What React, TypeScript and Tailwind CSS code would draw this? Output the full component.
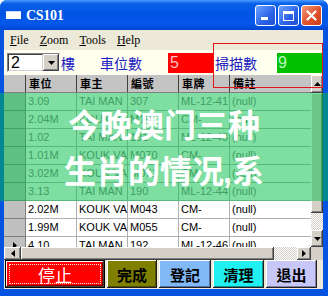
import React from 'react';

const rows: string[][] = [
  ['3.09', 'TAI MAN', '307', 'ML-12-41', '(null)'],
  ['2.04M', 'KOUK VA', 'M102', 'CM-', '(null)'],
  ['1.02', 'TAI MAN', '191', 'ML-12-43', '(null)'],
  ['1.01M', 'KOUK VA', 'M070', 'CM-', '(null)'],
  ['3.02M', 'KOUK VA', 'M071', 'CM-', '(null)'],
  ['3.13', 'TAI MAN', '190', 'ML-12-44', '(null)'],
  ['2.02M', 'KOUK VA', 'M043', 'CM-', '(null)'],
  ['1.99M', 'KOUK VA', 'M055', 'CM-', '(null)'],
  ['4.10', 'TAI MAN', '192', 'ML-12-46', '(null)'],
];

const headers = ['車位', '車主', '編號', '車牌', '備註'];

function Tri({ dir }: { dir: 'up' | 'down' | 'left' | 'right' }) {
  const pts =
    dir === 'up'
      ? '0,4 7,4 3.5,0'
      : dir === 'down'
      ? '0,0 7,0 3.5,4'
      : dir === 'left'
      ? '4,0 4,7 0,3.5'
      : '0,0 0,7 4,3.5';
  const w = dir === 'up' || dir === 'down' ? 7 : 4;
  const h = dir === 'up' || dir === 'down' ? 4 : 7;
  return (
    <svg width={w} height={h} viewBox={`0 0 ${w} ${h}`}>
      <polygon points={pts} fill="#000" />
    </svg>
  );
}

const bevel =
  'bg-[#d4d0c8] shadow-[inset_-1px_-1px_#404040,inset_1px_1px_#ffffff,inset_-2px_-2px_#808080]';

export default function App() {
  return (
    <div className="relative w-[328px] h-[296px] bg-white overflow-hidden font-['Liberation_Sans',Arial,sans-serif]">
      <div className="flex flex-col w-full h-full rounded-t-[7px] bg-[#0553e1]">
        {/* Title bar */}
        <div className="flex items-center h-[30px] rounded-t-[7px] pl-[6px] pr-[6px] bg-[linear-gradient(180deg,#4c9cff_0%,#0a60ea_12%,#0054e3_45%,#0558ea_80%,#0046d2_100%)]">
          <div className="w-[15px] h-[8px] bg-white border-t border-[#c8dcff]" />
          <span className="ml-[5px] text-white font-bold text-[14px] font-['Liberation_Serif',serif] tracking-[-0.3px]">
            CS101
          </span>
          <div className="ml-auto flex gap-[2px] self-start mt-[5px]">
            <div className="w-[21px] h-[21px] rounded-[3px] border border-white bg-[linear-gradient(135deg,#6ea2ff,#2a62e8_60%,#1f4fd0)] flex items-end pl-[5px] pb-[5px]">
              <div className="w-[7px] h-[3px] bg-white" />
            </div>
            <div className="w-[21px] h-[21px] rounded-[3px] border border-white bg-[linear-gradient(135deg,#6ea2ff,#2a62e8_60%,#1f4fd0)] flex items-center justify-center">
              <div className="w-[11px] h-[10px] border border-white border-t-[3px]" />
            </div>
            <div className="w-[21px] h-[21px] rounded-[3px] border border-white bg-[linear-gradient(135deg,#f09a7c,#e0522c_55%,#c8401c)] flex items-center justify-center">
              <svg width="11" height="11" viewBox="0 0 11 11">
                <path d="M1.5 1.5 L9.5 9.5 M9.5 1.5 L1.5 9.5" stroke="#fff" strokeWidth="2.2" strokeLinecap="round" />
              </svg>
            </div>
          </div>
        </div>

        {/* Client */}
        <div className="flex flex-col ml-[4px] mr-[5px] h-[259px] bg-[#ece9d8]">
          {/* Menu */}
          <div className="flex items-center h-[20px] pl-[6px] gap-[11px] text-[12px] text-black font-['Liberation_Serif',serif]">
            <span><span className="underline">F</span>ile</span>
            <span><span className="underline">Z</span>oom</span>
            <span><span className="underline">T</span>ools</span>
            <span><span className="underline">H</span>elp</span>
          </div>

          {/* Toolbar */}
          <div className="flex items-center h-[25px] pl-[3px] bg-[#fffff0] font-['Noto_Sans_CJK_TC',sans-serif] text-[14px] text-[#2020c0]">
            <div className="flex w-[53px] h-[19px] bg-white border border-t-[#808080] border-l-[#808080] border-r-white border-b-white">
              <div className="flex-1 flex items-center pl-[2px] text-[16px] leading-none text-black font-['Liberation_Sans',sans-serif] border border-t-[#404040] border-l-[#404040] border-r-[#d4d0c8] border-b-[#d4d0c8]">
                2
              </div>
              <div className={`w-[16px] flex items-center justify-center ${bevel}`}>
                <Tri dir="down" />
              </div>
            </div>
            <span className="ml-[1px] w-[39px] leading-none">樓</span>
            <span className="w-[68px] leading-none">車位數</span>
            <div className="w-[46px] h-[20px] bg-[#ff0000] flex items-center pl-[2px] text-[16px] text-[#ffc0c0] font-['Liberation_Sans',sans-serif]">
              5
            </div>
            <span className="w-[63px] pl-[1px] leading-none">掃描數</span>
            <div className="w-[45px] h-[20px] bg-[#00c000] flex items-center pl-[1px] text-[16px] text-[#b8f8b8] font-['Liberation_Sans',sans-serif]">
              9
            </div>
          </div>

          {/* Grid */}
          <div className="flex flex-col h-[185px]">
            <div className="flex h-[172px]">
              <div className="w-[307px] overflow-hidden bg-white text-[11px]">
                {/* header */}
                <div className="flex h-[18px] bg-[#c4c4c4] border-b border-[#808080]">
                  <div className="w-[22px] shrink-0 border-r border-[#404040]" />
                  {headers.map((h, i) => (
                    <div
                      key={h}
                      className={`${i < 4 ? 'w-[51px] border-r border-[#404040]' : 'flex-1'} shrink-0 flex items-center pl-[3px] font-bold text-black font-['Noto_Sans_CJK_TC',sans-serif] text-[11px] tracking-[0.5px]`}
                    >
                      {h}
                    </div>
                  ))}
                </div>
                {rows.map((r, ri) => (
                  <div key={ri} className="flex h-[18px]">
                    <div className="w-[22px] shrink-0 bg-[#c0c0c0] border-r border-b border-[#808080] flex items-center justify-center">
                      {ri === 8 ? <Tri dir="right" /> : null}
                    </div>
                    {r.map((c, ci) => (
                      <div
                        key={ci}
                        className={`${ci < 4 ? 'w-[51px] border-r' : 'flex-1'} shrink-0 border-b border-[#b0b0b0] flex items-center pl-[2px] whitespace-nowrap ${ri < 6 ? 'text-[#808080]' : 'text-black'}`}
                      >
                        {c}
                      </div>
                    ))}
                  </div>
                ))}
              </div>
              {/* vertical scrollbar */}
              <div className="w-[12px] flex flex-col">
                <div className={`h-[18px] flex items-center justify-center ${bevel}`}>
                  <Tri dir="up" />
                </div>
                <div className={`h-[120px] ${bevel}`} />
                <div className="flex-1 bg-[repeating-conic-gradient(#d4d0c8_0%_25%,#ffffff_0%_50%)] bg-[length:2px_2px]" />
                <div className={`h-[17px] flex items-center justify-center ${bevel}`}>
                  <Tri dir="down" />
                </div>
              </div>
            </div>
            {/* horizontal scrollbar */}
            <div className="flex h-[13px]">
              <div className={`w-[17px] flex items-center justify-center ${bevel}`}>
                <Tri dir="left" />
              </div>
              <div className={`w-[253px] ${bevel}`} />
              <div className="w-[23px] bg-[repeating-conic-gradient(#d4d0c8_0%_25%,#ffffff_0%_50%)] bg-[length:2px_2px]" />
              <div className={`w-[14px] flex items-center justify-center ${bevel}`}>
                <Tri dir="right" />
              </div>
              <div className="flex-1 bg-[#d4d0c8]" />
            </div>
          </div>

          {/* Buttons */}
          <div className="flex h-[29px] pl-[1px] gap-[2px] pb-[1px] font-['Noto_Sans_CJK_TC',sans-serif]">
            <div className="relative w-[100px] h-[28px] border border-black">
              <div className="w-full h-full bg-[#ff0000] shadow-[inset_-1px_-1px_#404040,inset_1px_1px_#ffffff,inset_-2px_-2px_#800000] flex items-center justify-center text-white text-[17px] leading-none">
                停止
              </div>
              <div className="absolute inset-[3px] border border-dotted border-[#ffe0e0]" />
            </div>
            <div className="w-[50px] h-[28px] bg-[#808000] shadow-[inset_-1px_-1px_#202020,inset_1px_1px_#ffffff,inset_-2px_-2px_#505000] flex items-center justify-center text-black font-bold text-[15px] leading-none">
              完成
            </div>
            <div className="w-[52px] h-[28px] bg-[#80b8f8] shadow-[inset_-1px_-1px_#202020,inset_1px_1px_#ffffff,inset_-2px_-2px_#5070a0] flex items-center justify-center text-black font-bold text-[15px] leading-none">
              登記
            </div>
            <div className="w-[51px] h-[28px] bg-[#20f0f0] shadow-[inset_-1px_-1px_#202020,inset_1px_1px_#ffffff,inset_-2px_-2px_#109090] flex items-center justify-center text-black font-bold text-[15px] leading-none">
              清理
            </div>
            <div className="w-[51px] h-[28px] bg-[#c8c8f8] shadow-[inset_-1px_-1px_#202020,inset_1px_1px_#ffffff,inset_-2px_-2px_#8080a8] flex items-center justify-center text-black font-bold text-[15px] leading-none">
              退出
            </div>
          </div>
        </div>
      </div>

      {/* red selection rectangle */}
      <div className="absolute left-[213px] top-[43px] w-[110px] h-[45px] border border-[#e01818]" />

      {/* green overlay banner */}
      <div className="absolute left-0 top-[93px] w-full h-[108px] bg-[rgba(0,190,70,0.5)] flex flex-col items-center justify-center text-white font-bold text-[32px] leading-[46px] font-['Noto_Sans_CJK_SC',sans-serif]">
        <span>今晚澳门三种</span>
        <span>
          生肖的情况<span className="font-['Liberation_Sans',sans-serif] -ml-[1px]">,</span>系
        </span>
      </div>
    </div>
  );
}
